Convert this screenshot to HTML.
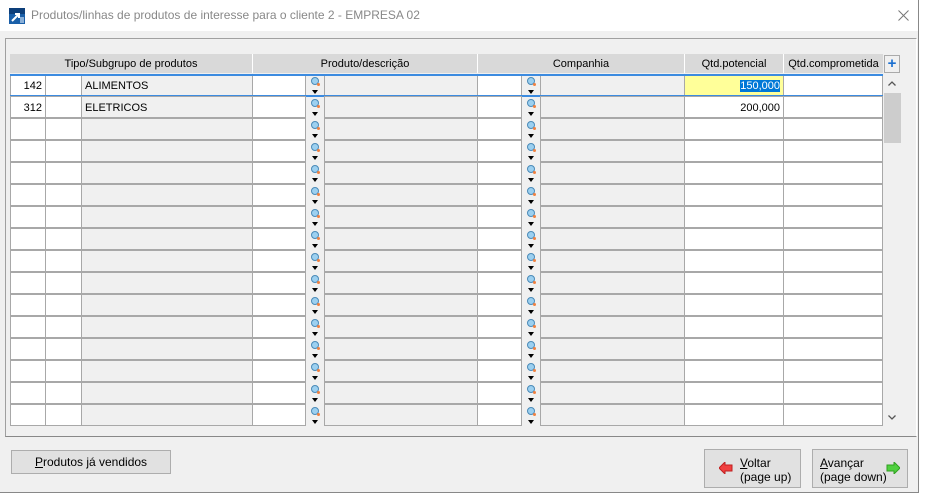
<!DOCTYPE html>
<html><head><meta charset="utf-8"><style>
*{box-sizing:border-box;margin:0;padding:0}
body{width:934px;height:501px;background:#fff;font-family:"Liberation Sans",sans-serif;font-size:11px;color:#000;position:relative;overflow:hidden}
.win{position:absolute;left:0;top:0;width:919px;height:493px;background:#f0f0f0;border-right:1px solid #888;border-bottom:1px solid #888}
.title{position:absolute;left:0;top:0;width:918px;height:31px;background:#fff}
.title span{position:absolute;left:31px;top:8px;font-size:12px;color:#888}
.x{position:absolute;left:897px;top:7px;font-size:14px;color:#888;font-weight:100}
.panel{position:absolute;left:5px;top:38px;width:912px;height:399px;border:1px solid #a0a0a0;border-right-color:#fff;border-bottom-color:#888}
.hd{position:absolute;top:54px;height:19px;background:#d9d9d9;text-align:center;line-height:21px;border-right:1px solid #fff}
.r{position:absolute;left:0;width:900px;height:22px}
.c{position:absolute;top:0;height:22px;border:1px solid #a8a8a8;background:#fff;line-height:22px;padding:0 3px}
.g{background:#f0f0f0}
.n{text-align:right}
.ic{position:absolute;top:3px;width:8px;height:8px}
.ic:before{content:"";position:absolute;left:0;top:0;width:6px;height:6px;border-radius:50%;background:#9cd0f0;border:1px solid #4a8ab8}
.ic:after{content:"";position:absolute;left:6px;top:6px;width:3px;height:3px;background:#f08040;border-radius:50%}
.ar{position:absolute;top:16px;width:0;height:0;border-left:3px solid transparent;border-right:3px solid transparent;border-top:4px solid #000}
.btn{position:absolute;background:#e1e1e1;border:1px solid #adadad;font-size:12px}
u{text-decoration:underline}
</style></head><body>
<div class="win">
<div class="title">
<svg style="position:absolute;left:9px;top:8px" width="16" height="16"><rect width="16" height="16" fill="#1a5fa8"/><rect y="0" width="16" height="6" fill="#0d3f7a"/><path d="M3 13 L10 6 M6 6 H10 V10" stroke="#fff" stroke-width="2" fill="none"/><rect x="11" y="9" width="4" height="6" fill="#8ab0d8"/></svg>
<span>Produtos/linhas de produtos de interesse para o cliente 2 - EMPRESA 02</span>
<svg style="position:absolute;left:898px;top:10px" width="11" height="11"><path d="M0.5 0.5 L10.5 10.5 M10.5 0.5 L0.5 10.5" stroke="#777" stroke-width="1"/></svg>
</div>
<div class="panel"></div>
<div class="hd" style="left:10px;width:243px">Tipo/Subgrupo de produtos</div>
<div class="hd" style="left:253px;width:225px">Produto/descrição</div>
<div class="hd" style="left:478px;width:207px">Companhia</div>
<div class="hd" style="left:685px;width:99px">Qtd.potencial</div>
<div class="hd" style="left:784px;width:99px;border-right:none">Qtd.comprometida</div>
<div style="position:absolute;left:884px;top:55px;width:16px;height:18px;border:1px solid #aaa;background:#f0f0f0;color:#1a6fd0;font-weight:bold;font-size:15px;line-height:15px;text-align:center">+</div>
<div style="position:absolute;left:884px;top:74px;width:17px;height:352px;background:#f0f0f0"></div>
<div style="position:absolute;left:884px;top:93px;width:17px;height:50px;background:#cdcdcd"></div>
<svg style="position:absolute;left:888px;top:81px" width="8" height="5"><path d="M0.5 4.5 L4 1 L7.5 4.5" stroke="#555" stroke-width="1.3" fill="none"/></svg>
<svg style="position:absolute;left:888px;top:415px" width="8" height="5"><path d="M0.5 0.5 L4 4 L7.5 0.5" stroke="#555" stroke-width="1.3" fill="none"/></svg>

<div id="rows">
<div class="r" style="top:74px"><div class="c n" style="left:10px;width:36px">142</div><div class="c" style="left:45px;width:37px"></div><div class="c g" style="left:81px;width:172px">ALIMENTOS</div><div class="c" style="left:252px;width:54px"></div><i class="ic" style="left:311px"></i><i class="ar" style="left:312px"></i><div class="c g" style="left:324px;width:154px"></div><div class="c" style="left:477px;width:45px"></div><i class="ic" style="left:527px"></i><i class="ar" style="left:528px"></i><div class="c g" style="left:540px;width:145px"></div><div class="c n" style="left:684px;width:100px;background:#ffff99"><span style="background:#0078d7;color:#fff">150,000</span></div><div class="c" style="left:783px;width:100px"></div>
<div style="position:absolute;left:10px;top:0;width:873px;height:2px;background:#3c8be0"></div><div style="position:absolute;left:10px;top:21px;width:873px;height:2px;background:#3c8be0"></div></div>
<div class="r" style="top:96px"><div class="c n" style="left:10px;width:36px">312</div><div class="c" style="left:45px;width:37px"></div><div class="c g" style="left:81px;width:172px">ELETRICOS</div><div class="c" style="left:252px;width:54px"></div><i class="ic" style="left:311px"></i><i class="ar" style="left:312px"></i><div class="c g" style="left:324px;width:154px"></div><div class="c" style="left:477px;width:45px"></div><i class="ic" style="left:527px"></i><i class="ar" style="left:528px"></i><div class="c g" style="left:540px;width:145px"></div><div class="c n" style="left:684px;width:100px">200,000</div><div class="c" style="left:783px;width:100px"></div></div>
</div>
<div id="more"></div>

<div class="btn" style="left:11px;top:450px;width:160px;height:24px;text-align:center;line-height:22px"><u>P</u>rodutos já vendidos</div>
<div class="btn" style="left:704px;top:449px;width:97px;height:39px">
<svg style="position:absolute;left:14px;top:12px" width="14" height="12"><path d="M0 6 L6 0 V3 H13 V9 H6 V12 Z" fill="#f04040" stroke="#c02020" stroke-width="1"/></svg>
<div style="position:absolute;left:35px;top:6px;line-height:14px"><u>V</u>oltar<br>(page up)</div></div>
<div class="btn" style="left:812px;top:449px;width:96px;height:39px">
<div style="position:absolute;left:7px;top:6px;line-height:14px"><u>A</u>vançar<br>(page down)</div>
<svg style="position:absolute;left:73px;top:12px" width="14" height="12"><path d="M14 6 L8 0 V3 H1 V9 H8 V12 Z" fill="#50d040" stroke="#30a020" stroke-width="1"/></svg></div>
</div>
<script>
var h='';
for(var i=2;i<16;i++){var t=74+22*i;
h+='<div class="r" style="top:'+t+'px"><div class="c" style="left:10px;width:36px"></div><div class="c" style="left:45px;width:37px"></div><div class="c g" style="left:81px;width:172px"></div><div class="c" style="left:252px;width:54px"></div><i class="ic" style="left:311px"></i><i class="ar" style="left:312px"></i><div class="c g" style="left:324px;width:154px"></div><div class="c" style="left:477px;width:45px"></div><i class="ic" style="left:527px"></i><i class="ar" style="left:528px"></i><div class="c g" style="left:540px;width:145px"></div><div class="c" style="left:684px;width:100px"></div><div class="c" style="left:783px;width:100px"></div></div>';}
document.getElementById('more').innerHTML=h;
</script>
</body></html>
